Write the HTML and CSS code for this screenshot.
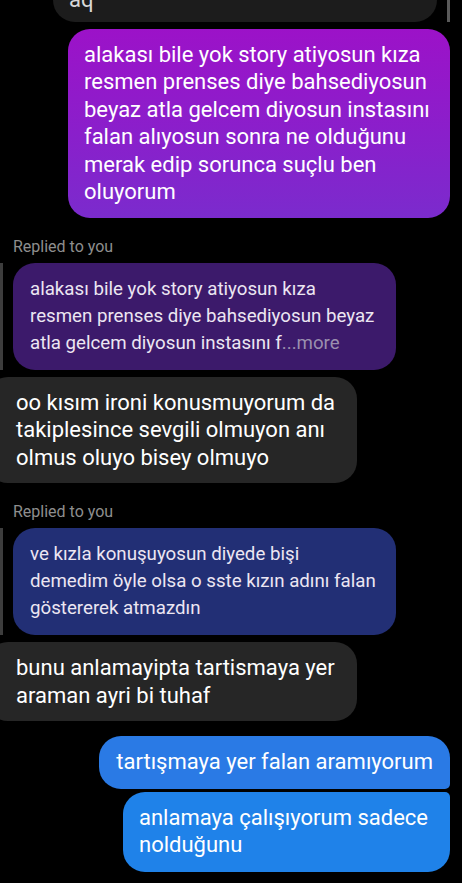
FILE: index.html
```html
<!DOCTYPE html>
<html lang="tr">
  <head>
    <meta charset="UTF-8" />
    <meta name="viewport" content="width=device-width, initial-scale=1.0" />
    <title>Mesajlar</title>
    <link rel="stylesheet" href="styles.css">
  </head>
  <body>
    <div class="scrollbar"></div>
    <div class="thread">
      <div class="row theirs">
        <div class="bubble dark cut">aq</div>
      </div>

      <div class="row mine">
        <div class="bubble purple">
          alakası bile yok story atiyosun kıza resmen prenses diye bahsediyosun
          beyaz atla gelcem diyosun instasını falan alıyosun sonra ne olduğunu
          merak edip sorunca suçlu ben oluyorum
        </div>
      </div>

      <div class="replied">Replied to you</div>
      <div class="quote">
        <div class="bubble small quote-purple">
          alakası bile yok story atiyosun kıza resmen prenses diye bahsediyosun
          beyaz atla gelcem diyosun instasını f<span class="more">...more</span>
        </div>
      </div>
      <div class="row theirs">
        <div class="bubble gray">
          oo kısım ironi konusmuyorum da takiplesince sevgili olmuyon anı
          olmus oluyo bisey olmuyo
        </div>
      </div>

      <div class="replied">Replied to you</div>
      <div class="quote">
        <div class="bubble small quote-blue">
          ve kızla konuşuyosun diyede bişi demedim öyle olsa o sste kızın adını
          falan göstererek atmazdın
        </div>
      </div>
      <div class="row theirs">
        <div class="bubble gray">
          bunu anlamayipta tartismaya yer araman ayri bi tuhaf
        </div>
      </div>

      <div class="row mine first">
        <div class="bubble blue group-top">tartışmaya yer falan aramıyorum</div>
      </div>
      <div class="row mine next">
        <div class="bubble blue2 group-bottom">
          anlamaya çalışıyorum sadece nolduğunu
        </div>
      </div>
    </div>
  </body>
</html>
```

FILE: styles.css
```css
body {
  font-family: Roboto, "Noto Sans", Arial, sans-serif;
  background-color: #000000;
  margin: 0;
  padding: 0;
  color: #ffffff;
  overflow: hidden;
}
.thread {
  display: flex;
  flex-direction: column;
  padding-right: 12px;
}
.scrollbar {
  position: absolute;
  top: 0;
  right: 12px;
  width: 3px;
  height: 22px;
  background-color: #5a5a5a;
}
.row {
  display: flex;
  margin-top: 7px;
}
.row.mine {
  justify-content: flex-end;
}
.row.first {
  margin-top: 15px;
}
.row.next {
  margin-top: 3px;
}
.bubble {
  font-size: 22px;
  line-height: 27.5px;
  padding: 12px 16px;
  border-radius: 22px;
  box-sizing: border-box;
}
.bubble.cut {
  margin-top: -33px;
  margin-left: 53px;
  width: 384px;
  padding-bottom: 8px;
  background-color: #1c1c1c;
  color: #d8d8d8;
}
.purple {
  width: 382px;
  background: linear-gradient(180deg, #9c12c8 0%, #8a1fcb 55%, #7b2bcd 100%);
}
.replied {
  margin: 19px 0 6px 13px;
  font-size: 16px;
  line-height: 20px;
  color: #8e8e8e;
}
.quote {
  display: flex;
  border-left: 3px solid #3d3d3d;
}
.bubble.small {
  width: 383px;
  margin-left: 10px;
  font-size: 18.7px;
  line-height: 27px;
  padding: 13px 14px 13px 17px;
  color: #ece6f2;
}
.quote-purple {
  background-color: #3c1a6b;
}
.quote-blue {
  background-color: #222f75;
}
.more {
  color: #9a8fae;
}
.gray {
  margin-left: -14px;
  width: 371px;
  padding-left: 30px;
  background-color: #262626;
}
.blue,
.blue2 {
  padding: 12px 17px 13px 17px;
}
.blue {
  background-color: #2a7ae5;
}
.blue2 {
  max-width: 327px;
  padding-left: 16px;
  background-color: #1f82e9;
}
.group-top {
  border-bottom-right-radius: 5px;
}
.group-bottom {
  border-top-right-radius: 5px;
}
```
